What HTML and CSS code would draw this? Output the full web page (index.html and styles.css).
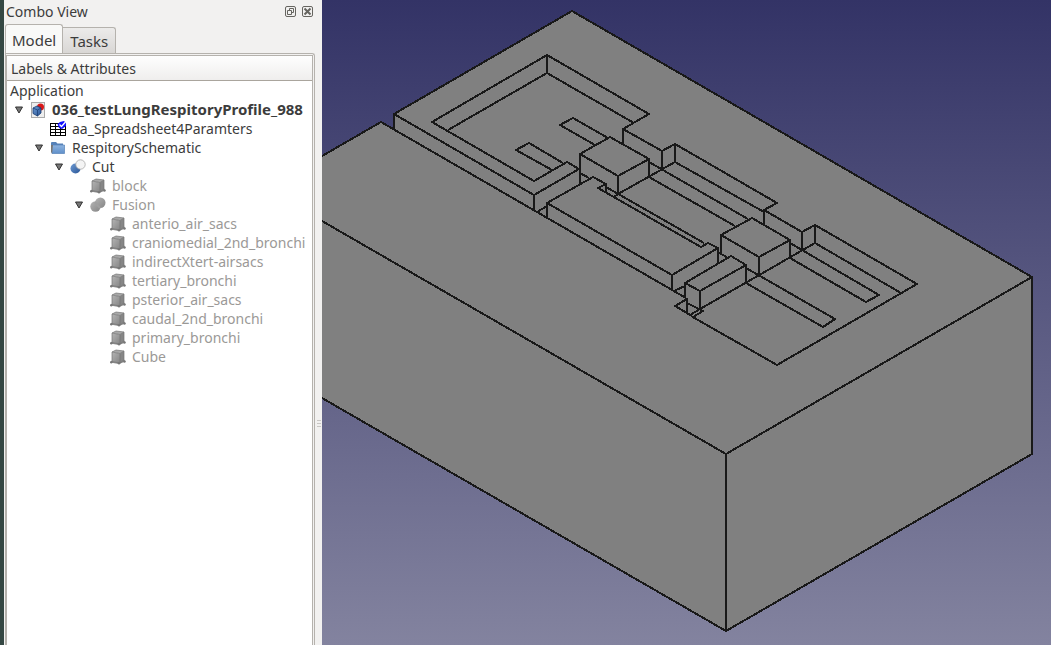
FILE: index.html
```html
<!DOCTYPE html>
<html lang="en">
<head>
<meta charset="utf-8">
<title>Combo View</title>
<link rel="stylesheet" href="styles.css">
</head>
<body>
<svg class="defs" aria-hidden="true">
  <defs>
    <linearGradient id="gray" x2="1" y2="1"><stop offset="0" stop-color="#b4b4b4"/><stop offset="1" stop-color="#858585"/></linearGradient>
    <linearGradient id="blue" x2="1" y2="1"><stop offset="0" stop-color="#6d9bd3"/><stop offset="1" stop-color="#2a5596"/></linearGradient>
    <linearGradient id="folder" x2="0" y2="1"><stop offset="0" stop-color="#8fb4e0"/><stop offset="1" stop-color="#6090ca"/></linearGradient>
    <symbol id="box" viewBox="0 0 16 16">
      <path d="M0 13.500L3 10.500H14L15.500 12.500L9 15Z" fill="#8c8c8c"/>
      <path d="M2 3L6 1L14 2L10 4.500Z" fill="#a8a8a8"/>
      <path d="M2 3L10 4.500V14L2 12.500Z" fill="url(#gray)"/>
      <path d="M10 4.500L14 2V11L10 14Z" fill="#868686"/>
      <path d="M2 3L6 1L14 2V11L10 14L2 12.500Z M2 3L10 4.500L14 2 M10 4.500V14" fill="none" stroke="#747474" stroke-width=".7"/>
      <circle cx="1.300" cy="13.300" r="1.200" fill="#777"/><circle cx="14.500" cy="12.500" r="1.200" fill="#777"/><circle cx="9" cy="14.300" r="1.200" fill="#777"/>
    </symbol>
    <symbol id="arrow" viewBox="0 0 8 8"><path d="M.5 1H7.500L4 7Z" fill="#777" stroke="#333"/></symbol>
  </defs>
</svg>
<div class="app">
  <aside class="dock">
    <header class="titlebar">
      <h1 class="title">Combo View</h1>
      <button class="tool" aria-label="Float"><svg viewBox="0 0 11 11"><rect x=".5" y=".5" width="10" height="10" rx="1.500"/><path d="M4.500 4.500V2.500H8.500V6.500H6.500M2.500 4.500H6.500V8.500H2.500Z"/></svg></button>
      <button class="tool" aria-label="Close"><svg viewBox="0 0 11 11"><rect x=".5" y=".5" width="10" height="10" rx="1.500"/><path d="M2.500 2.500L8.500 8.500M8.500 2.500L2.500 8.500" stroke-width="2"/></svg></button>
    </header>
    <div class="tabs" role="tablist">
      <button class="tab tab-active" role="tab" aria-selected="true">Model</button>
      <button class="tab" role="tab" aria-selected="false">Tasks</button>
    </div>
    <div class="pane">
      <div class="tree">
        <div class="tree-head">Labels &amp; Attributes</div>
        <ul class="rows">
          <li class="row root">Application</li>
          <li class="row level-0 bold"><svg class="arrow"><use href="#arrow"/></svg><svg class="icon" viewBox="0 0 16 16"><rect x="1.500" y=".5" width="13" height="15" fill="#eee" stroke="#aaa"/><circle cx="10.500" cy="5" r="3.500" fill="#d81818"/><path d="M3 6L7 4L11 6V11L7.500 14L3 11.500Z" fill="url(#blue)" stroke="#173b70" stroke-width=".8"/><path d="M3 6L7.500 8L11 6M7.500 8V14" fill="none" stroke="#173b70" stroke-width=".7"/></svg>036_testLungRespitoryProfile_988</li>
          <li class="row level-1"><span class="arrow"></span><svg class="icon" viewBox="0 0 16 16"><path d="M.5 2.500H15.500V14.500H.5ZM.5 5.500H15.500M.5 8.500H15.500M.5 11.500H15.500M5.500 2.500V14.500M10.500 2.500V14.500" fill="#fff" stroke="#000" shape-rendering="crispEdges"/><path d="M7.500 3L10 1L14 0L16 2V5L12 8L9 7Z" fill="#1010ff"/><path d="M9.500 3.500L11.500 5.500L15.500 1" fill="none" stroke="#fff" stroke-width="1.300"/></svg>aa_Spreadsheet4Paramters</li>
          <li class="row level-1"><svg class="arrow"><use href="#arrow"/></svg><svg class="icon" viewBox="0 0 16 16"><path d="M1 3Q1 2 2 2H6L7.500 3.500H13V6H1Z" fill="#5682b8"/><path d="M2.500 5H14.500V13.500H2Z" fill="url(#folder)" stroke="#5682b8" stroke-width=".7"/><path d="M1 5V12L2 13.500L3 5Z" fill="#777"/></svg>RespitorySchematic</li>
          <li class="row level-2"><svg class="arrow"><use href="#arrow"/></svg><svg class="icon" viewBox="0 0 16 16"><circle cx="5.500" cy="9.500" r="5" fill="url(#blue)"/><circle cx="10.500" cy="5.500" r="4.700" fill="#f4f4f4" stroke="#aaa" stroke-width=".8"/></svg>Cut</li>
          <li class="row level-3 dim"><span class="arrow"></span><svg class="icon"><use href="#box"/></svg>block</li>
          <li class="row level-3 dim"><svg class="arrow"><use href="#arrow"/></svg><svg class="icon" viewBox="0 0 16 16"><circle cx="5.500" cy="9.500" r="5.200" fill="url(#gray)"/><circle cx="10.300" cy="5.800" r="5.200" fill="url(#gray)"/><path d="M5 5L10 11" stroke="#a0a0a0" stroke-width="2"/></svg>Fusion</li>
          <li class="row level-4 dim"><span class="arrow"></span><svg class="icon"><use href="#box"/></svg>anterio_air_sacs</li>
          <li class="row level-4 dim"><span class="arrow"></span><svg class="icon"><use href="#box"/></svg>craniomedial_2nd_bronchi</li>
          <li class="row level-4 dim"><span class="arrow"></span><svg class="icon"><use href="#box"/></svg>indirectXtert-airsacs</li>
          <li class="row level-4 dim"><span class="arrow"></span><svg class="icon"><use href="#box"/></svg>tertiary_bronchi</li>
          <li class="row level-4 dim"><span class="arrow"></span><svg class="icon"><use href="#box"/></svg>psterior_air_sacs</li>
          <li class="row level-4 dim"><span class="arrow"></span><svg class="icon"><use href="#box"/></svg>caudal_2nd_bronchi</li>
          <li class="row level-4 dim"><span class="arrow"></span><svg class="icon"><use href="#box"/></svg>primary_bronchi</li>
          <li class="row level-4 dim"><span class="arrow"></span><svg class="icon"><use href="#box"/></svg>Cube</li>
        </ul>
      </div>
    </div>
  </aside>
  <div class="splitter"><span class="grip"></span></div>
  <main class="view">
    <svg class="scene" viewBox="322 0 729 645" preserveAspectRatio="xMinYMin slice" role="img" aria-label="3D model">
      <path class="solid" d="M572 11L1032 277V454L726 631L322 398V156L381 122L394 129V114Z"/>
      <g class="edges">
        <path d="M322 156L381 122L686 298M394 129V114L572 11L1032 277V454L726 631L322 398M322 221L726 454L1032 277M726 454V631"/>
        <path d="M394 114L534 195L579 169L567 162L534 181L432 122L547 55L649 114L623 129V144M547 55V73M448 130L547 73L634 123M534 195V211"/>
        <path d="M552 170L516 150L529 143L563 163M595 145L560 125L573 118L608 138"/>
        <path d="M623 129L662 151L675 144L777 203L764 210L802 232L815 225L917 284L777 365L691 316"/>
        <path d="M662 151V169M675 144V162L618 194L614 197M675 162L764 212M764 210V225M802 232V250M815 225V243M815 243L901 293M815 243L700 309"/>
        <path d="M610 137L649 159L618 176L580 154ZM580 154V183M618 176V194M649 159V177"/>
        <path d="M649 177L735 226M649 162L748 219M537 212L547 206M547 218V203L593 177L606 184V193M580 173L589 178M606 184L598 188L701 247L708 243L718 248L672 275L547 203M606 187L704 243M672 275V290M718 248V263"/>
        <path d="M752 218L790 240L759 257L721 235ZM721 235V254M759 257V276M790 240V258M718 252L728 258"/>
        <path d="M790 243L879 295L866 302L790 258M746 268L835 319L823 327L746 283"/>
        <path d="M731 256L746 265L700 291L685 283ZM685 283V298M700 291V309M746 265V283M674 291L685 286"/>
        <path d="M687 298V314M687 299L675 306L692 316M687 303L703 311L693 317M700 309L690 315"/>
      </g>
    </svg>
  </main>
</div>
</body>
</html>
```
FILE: styles.css
```css
* { box-sizing: border-box; }
body { margin: 0; font: 14px/19px "Noto Sans", "Open Sans", sans-serif; color: #3c3c3c; }
button { font: inherit; color: inherit; margin: 0; }
.defs { display: block; width: 0; height: 0; }
.app { display: flex; height: 100vh; overflow: hidden; background: #f2f1f0; }
.dock { display: flex; flex-direction: column; flex: 0 0 315px; border-left: 4px solid #344743; padding-left: 1px; }
.titlebar { display: flex; align-items: center; gap: 6px; height: 23px; padding: 0 2px 0 1px; }
.title { flex: 1; margin: 0; font-size: 14px; font-weight: 400; }
.tool { display: flex; width: 11px; height: 11px; padding: 0; border: 0; background: none; }
.tool svg { width: 11px; height: 11px; fill: none; stroke: #666560; }
.tabs { display: flex; align-items: flex-end; height: 30px; }
.tab { height: 26px; padding: 0 7px; font-size: 15px; line-height: 20px; border: 1px solid #b5b2ad; border-left: 0; border-bottom: 0; border-radius: 0 3px 0 0; background: linear-gradient(#ecebea, #d9d7d5); }
.tab-active { height: 30px; margin-bottom: -1px; padding: 0 6px; border-left: 1px solid #b5b2ad; border-radius: 3px 3px 0 0; background: #f9f9f8; }
.pane { display: flex; flex: 1; border: 1px solid #b5b2ad; border-bottom: 0; border-radius: 0 3px 0 0; padding: 1px 1px 0 0; min-height: 0; }
.tree { flex: 1; min-width: 0; border: 1px solid #b5b2ad; border-bottom: 0; background: #fff; overflow: hidden; }
.tree-head { height: 25px; padding: 0 4px; line-height: 26px; border-bottom: 1px solid #aaa59d; background: linear-gradient(#fefefe, #efeeed); }
.rows { margin: 0; padding: 0; list-style: none; }
.row { display: flex; align-items: center; height: 19px; white-space: nowrap; }
.root { padding-left: 3px; }
.level-0 { padding-left: 8px; }
.level-1 { padding-left: 28px; }
.level-2 { padding-left: 48px; }
.level-3 { padding-left: 68px; }
.level-4 { padding-left: 88px; }
.bold { font-size: 15px; font-weight: 700; }
.dim { color: #9b9997; }
.arrow { flex: none; width: 8px; height: 8px; margin-right: 7px; }
.icon { flex: none; width: 16px; height: 16px; margin-right: 6px; }
.splitter { display: flex; flex: 0 0 7px; align-items: center; padding-top: 202px; }
.grip { width: 4px; height: 7px; margin-left: 2px; background: repeating-linear-gradient(#c8c6c3 0 1px, transparent 1px 3px); }
.view { flex: 1; min-width: 0; background: linear-gradient(#333366, #83839f); }
.scene { display: block; width: 100%; height: 100%; }
.solid { fill: #808080; }
.edges { fill: none; stroke: #191919; stroke-width: 2; stroke-linejoin: round; shape-rendering: crispEdges; }
```
